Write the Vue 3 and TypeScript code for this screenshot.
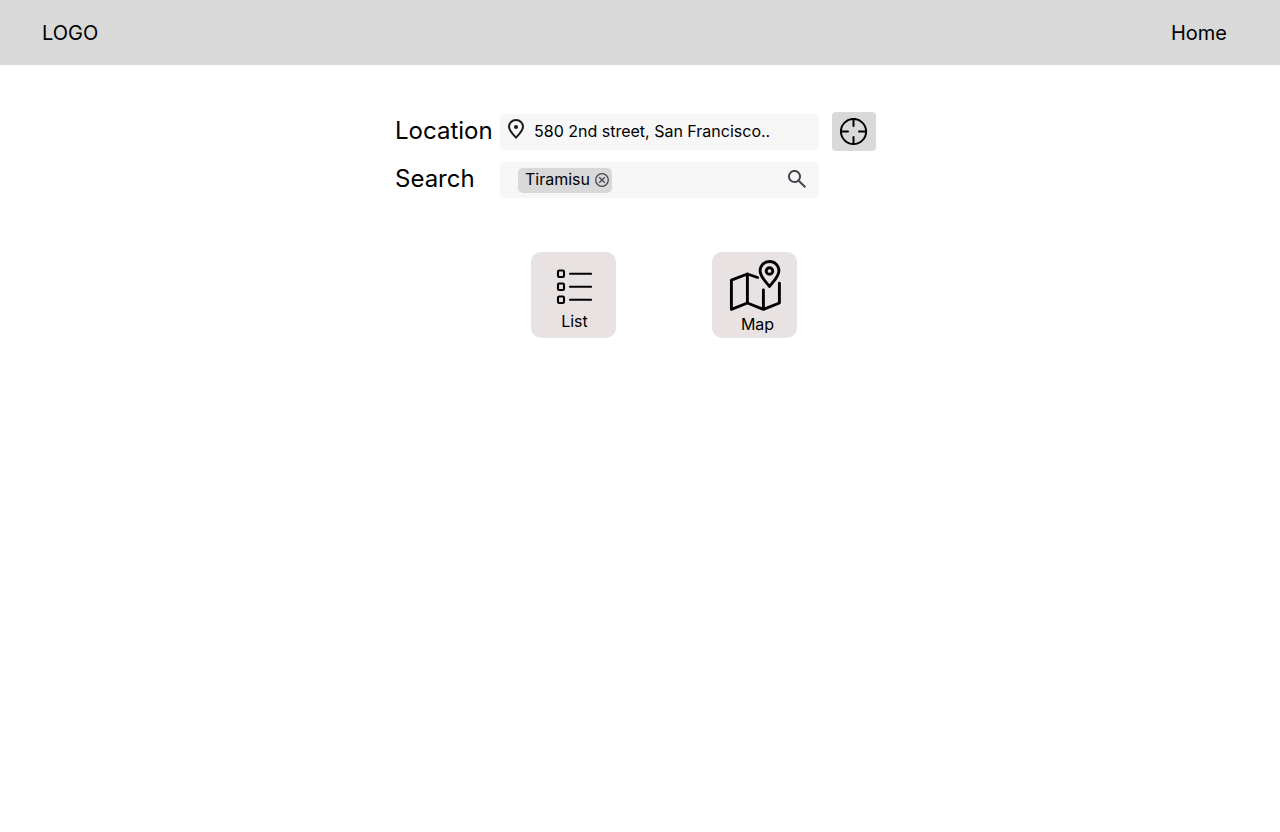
<script setup lang="ts">
import { ref } from 'vue'

const address = ref<string>('580 2nd street, San Francisco..')
const tags = ref<string[]>(['Tiramisu'])
const query = ref<string>('')

function removeTag(tag: string): void {
  tags.value = tags.value.filter((t) => t !== tag)
}
</script>

<template>
  <div class="page">
    <header class="bar">
      <a class="bar-link" href="#">LOGO</a>
      <nav><a class="bar-link" href="#home">Home</a></nav>
    </header>

    <main class="main">
      <form class="finder" @submit.prevent>
        <label class="label" for="location">Location</label>
        <div class="field">
          <svg class="pin" viewBox="0 0 18 22" aria-hidden="true">
            <path d="M9 2C5.1 2 2 5 2 8.8C2 12.6 5.4 15.6 9 19.6C12.6 15.6 16 12.6 16 8.8C16 5 12.9 2 9 2Z" fill="none" stroke="#1d1b20" stroke-width="2" />
            <circle cx="9" cy="9" r="2.1" fill="#1d1b20" />
          </svg>
          <input id="location" v-model="address" class="input" type="text" />
        </div>
        <button class="locate" type="button" aria-label="Use my location">
          <svg viewBox="0 0 28 28" width="28" height="28" fill="none" stroke="#000" stroke-width="2" aria-hidden="true">
            <circle cx="13.5" cy="13.5" r="12.6" />
            <path d="M13.5 1.5V8M13.5 19V25.5M1.5 13.5H8M19 13.5H25.5" stroke-linecap="round" />
          </svg>
        </button>

        <label class="label" for="search">Search</label>
        <div class="field search-field">
          <span v-for="tag in tags" :key="tag" class="tag">
            <span class="tag-text">{{ tag }}</span>
            <button class="clear" type="button" :aria-label="'Remove ' + tag" @click="removeTag(tag)">
              <svg viewBox="0 0 14 14" width="14" height="14" fill="none" stroke="#49454f" stroke-width="1.3" aria-hidden="true">
                <circle cx="7" cy="7" r="6.3" />
                <path d="M4.2 4.2L9.8 9.8M9.8 4.2L4.2 9.8" />
              </svg>
            </button>
          </span>
          <input id="search" v-model="query" class="input" type="text" />
          <button class="go" type="submit" aria-label="Search">
            <svg viewBox="3 3 18 18" width="18" height="18" fill="#49454f" aria-hidden="true">
              <path d="M19.6 21L13.3 14.7C12.8 15.1 12.2 15.4 11.6 15.7C10.9 15.9 10.2 16 9.5 16C7.7 16 6.1 15.4 4.9 14.1C3.6 12.9 3 11.3 3 9.5C3 7.7 3.6 6.1 4.9 4.9C6.1 3.6 7.7 3 9.5 3C11.3 3 12.9 3.6 14.1 4.9C15.4 6.1 16 7.7 16 9.5C16 10.2 15.9 10.9 15.7 11.6C15.4 12.2 15.1 12.8 14.7 13.3L21 19.6L19.6 21ZM9.5 14C10.8 14 11.8 13.6 12.7 12.7C13.6 11.8 14 10.8 14 9.5C14 8.3 13.6 7.2 12.7 6.3C11.8 5.4 10.8 5 9.5 5C8.3 5 7.2 5.4 6.3 6.3C5.4 7.2 5 8.3 5 9.5C5 10.8 5.4 11.8 6.3 12.7C7.2 13.6 8.3 14 9.5 14Z" />
            </svg>
          </button>
        </div>

        <div class="views">
          <button class="card list-card" type="button">
            <svg viewBox="0 0 36 36" width="36" height="36" fill="none" stroke="#000" stroke-width="2.1" aria-hidden="true">
              <rect x="2" y="2.5" width="6" height="6.5" rx="1.2" />
              <rect x="2" y="15.5" width="6" height="6.5" rx="1.2" />
              <rect x="2" y="28.5" width="6" height="6.5" rx="1.2" />
              <path d="M14 5.8H35M14 18.8H35M14 31.8H35" stroke-linecap="round" />
            </svg>
            <span class="card-text">List</span>
          </button>
          <button class="card map-card" type="button">
            <svg viewBox="0 0 52 52" width="52" height="52" fill="none" stroke="#000" stroke-width="2.9" stroke-linecap="round" stroke-linejoin="round" aria-hidden="true">
              <path d="M28.6 17.5L18.4 14L2.4 20.2V49.4L18.4 43L34.4 49.4L50.4 43V23.2M18.4 14V43M34.4 30V49.4" />
              <path d="M40.5 26.5C36.8 21.4 31.1 16.8 31.1 10.7C31.1 5.6 35.1 1.5 40.5 1.5C45.9 1.5 49.9 5.6 49.9 10.7C49.9 16.8 44.2 21.4 40.5 26.5Z" />
              <circle cx="40.5" cy="11" r="3.3" />
            </svg>
            <span class="card-text">Map</span>
          </button>
        </div>
      </form>
    </main>
  </div>
</template>

<style>
body {
  margin: 0;
  background: #fff;
}
</style>

<style scoped>
.page {
  font-family: Inter, "Liberation Sans", sans-serif;
  color: #000;
}
.bar {
  display: flex;
  align-items: center;
  justify-content: space-between;
  box-sizing: border-box;
  min-height: 65px;
  padding: 0 53px 0 42px;
  background: #d9d9d9;
}
.bar-link {
  font-size: 20px;
  line-height: 24px;
  color: inherit;
  text-decoration: none;
}
button {
  margin: 0;
  padding: 0;
  border: 0;
  font: inherit;
  color: inherit;
  cursor: pointer;
}
svg {
  display: block;
  flex: none;
}
.main {
  display: flex;
  justify-content: center;
  padding: 47px 9px 48px 0;
}
.finder {
  display: grid;
  grid-template-columns: 105px 319px 57px;
  grid-template-rows: 40px 36px auto;
  row-gap: 10px;
  align-items: center;
}
.label {
  font-size: 24px;
  line-height: 28px;
  padding-bottom: 2px;
}
.field {
  display: flex;
  align-items: center;
  box-sizing: border-box;
  height: 36px;
  padding: 0 13px 2px 7px;
  border-radius: 4px;
  background: #f7f7f7;
}
.pin {
  width: 18px;
  height: 22px;
  margin: 0 9px 4px 0;
}
.input {
  flex: 1;
  min-width: 0;
  padding: 0;
  border: 0;
  outline: 0;
  background: transparent;
  font: inherit;
  font-size: 16px;
  line-height: 20px;
  color: #000;
}
.locate {
  display: flex;
  align-items: center;
  justify-content: center;
  align-self: start;
  width: 44px;
  height: 39px;
  margin-left: 13px;
  border-radius: 4px;
  background: #d9d9d9;
}
.search-field {
  padding-left: 18px;
}
.tag {
  display: flex;
  align-items: center;
  gap: 5px;
  box-sizing: border-box;
  height: 25px;
  margin-top: 2px;
  padding: 0 3px 0 7px;
  border-radius: 5px;
  background: #d9d9d9;
  font-size: 16px;
  line-height: 20px;
}
.tag-text {
  padding-bottom: 2px;
}
.clear,
.go {
  background: transparent;
}
.views {
  grid-column: 1 / -1;
  display: flex;
  gap: 96px;
  margin: 44px 0 0 136px;
}
.card {
  display: flex;
  flex-direction: column;
  align-items: center;
  box-sizing: border-box;
  width: 85px;
  height: 86px;
  border-radius: 10px;
  background: #e8e2e2;
  font-size: 16px;
  line-height: 20px;
}
.list-card {
  padding-top: 16px;
  gap: 7px;
}
.list-card .card-text {
  padding-left: 2px;
}
.map-card {
  padding-top: 8px;
  gap: 2px;
}
.map-card .card-text {
  padding-left: 6px;
}
</style>
